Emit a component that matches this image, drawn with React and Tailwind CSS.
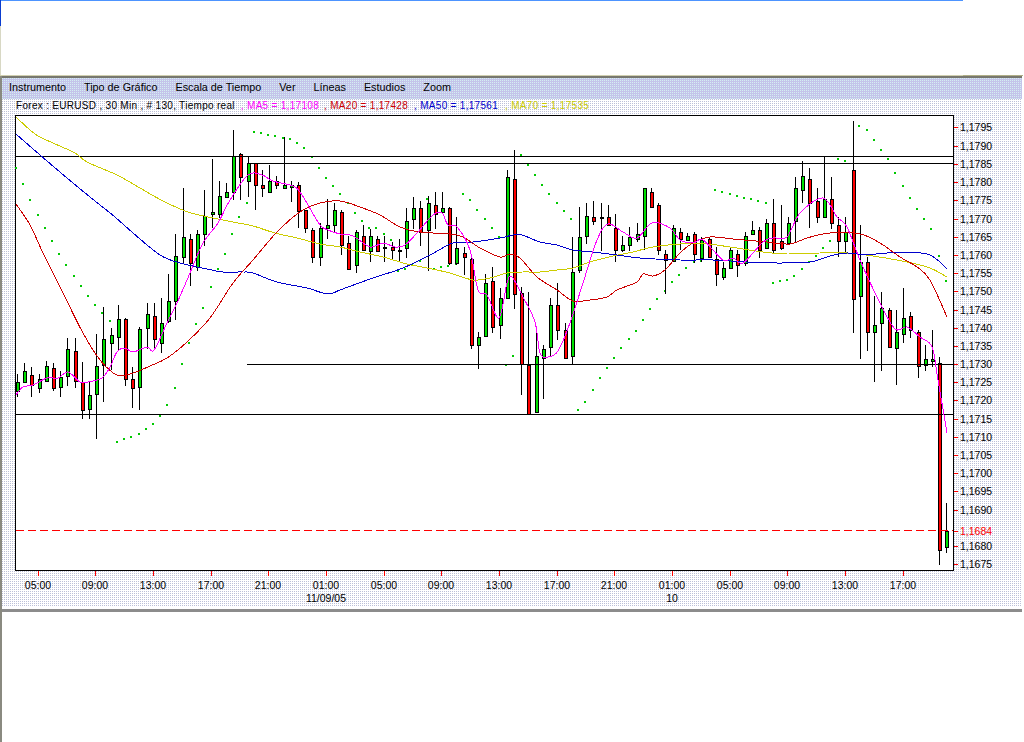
import React from 'react';

// [high, bodyTop, bodyBottom, low, isGreen] in page pixels, one per 30 min bar
const candles = [
  [374,382,391,397,1],[363,371,382,382,1],[367,375,385,397,0],[374,379,388,393,1],[361,366,381,382,1],
  [363,368,388,391,0],[371,377,387,397,1],[338,349,376,386,1],[338,351,381,388,0],[362,382,410,419,0],
  [382,395,409,419,1],[334,366,394,439,1],[307,339,365,402,1],[328,335,343,370,1],[305,319,337,351,1],
  [318,319,379,386,0],[367,379,388,408,0],[327,329,387,410,1],[303,314,328,349,1],[303,316,339,349,0],
  [298,323,343,353,1],[274,301,321,323,1],[234,256,301,320,1],[188,237,257,263,1],[234,239,263,286,0],
  [230,234,267,271,1],[190,216,234,246,1],[159,212,214,228,1],[181,196,214,218,1],[183,192,197,198,1],
  [130,156,192,200,1],[153,154,177,200,0],[157,163,181,197,1],[163,163,185,210,0],[170,185,188,197,0],
  [165,181,192,193,1],[176,181,185,189,0],[137,185,188,189,1],[181,185,187,202,1],[182,185,211,228,0],
  [210,210,228,233,0],[228,230,257,263,0],[223,228,257,266,1],[199,225,228,239,1],[203,210,225,233,1],
  [210,212,245,255,0],[236,243,269,269,0],[230,232,265,273,1],[225,236,250,251,0],[229,236,251,262,1],
  [236,239,251,251,0],[236,247,248,262,0],[242,247,250,260,0],[239,250,251,261,0],[208,221,248,258,1],
  [197,208,219,229,1],[201,208,232,246,0],[196,203,230,271,1],[192,205,214,229,0],[192,208,212,213,1],
  [207,208,263,265,0],[217,248,263,265,1],[247,253,257,275,0],[254,259,345,349,0],[332,337,345,369,1],
  [274,283,336,337,1],[267,281,327,333,0],[288,298,325,339,1],[170,177,298,298,1],[150,179,294,309,0],
  [287,293,364,395,0],[292,365,414,414,0],[332,356,412,412,1],[345,349,358,399,1],[298,305,347,357,1],
  [283,305,330,340,0],[323,330,358,359,0],[237,272,356,364,1],[207,237,270,273,1],[203,216,236,244,1],
  [201,217,221,225,0],[203,217,218,251,0],[205,217,225,226,0],[214,228,250,262,0],[236,245,250,252,1],
  [227,237,245,251,1],[223,234,239,242,1],[188,188,236,250,1],[188,192,207,208,0],[203,205,250,255,0],
  [250,254,260,294,0],[225,228,261,262,1],[228,232,239,250,0],[233,236,240,240,1],[232,234,254,263,0],
  [237,240,258,262,1],[237,239,257,257,0],[247,259,274,286,0],[262,268,277,280,1],[247,250,268,268,1],
  [250,254,265,277,0],[232,236,263,266,1],[221,230,234,235,1],[227,230,250,258,0],[219,223,248,248,1],
  [199,223,250,254,0],[205,241,248,250,0],[217,223,243,243,1],[177,188,221,242,1],[161,176,190,203,1],
  [168,179,203,228,0],[188,201,217,223,0],[157,199,217,218,1],[177,199,223,229,0],[217,225,241,257,0],
  [217,232,241,252,1],[121,170,299,333,0],[225,262,296,359,1],[257,262,332,351,0],[296,325,332,382,1],
  [292,308,323,371,1],[308,310,347,347,0],[310,332,348,385,1],[288,318,334,343,1],[312,316,330,338,0],
  [330,332,366,378,0],[345,359,365,371,1],[330,359,361,367,1],[357,363,550,565,0],[503,531,547,553,1],
];

const ma70 = '16,117 35,134 53,143 75,153 87,162 117,175 140,188 163,201 188,212 213,218 233,222 253,226 275,233 297,238 320,244 340,247 360,252 383,257 407,264 427,268 450,273 473,280 490,278 507,273 523,272 540,272 557,270 573,268 590,262 613,256 633,252 653,247 680,244 707,244 730,247 763,252 787,254 820,253 847,253 873,256 907,262 930,268 947,277';
const ma50 = '16,134 40,155 67,178 90,197 115,217 133,233 160,255 180,263 207,269 223,272 243,272 253,273 277,282 307,288 323,293 333,293 340,290 373,278 403,268 430,255 453,243 473,242 500,238 513,235 522,235 540,242 557,245 573,250 593,252 617,255 640,258 680,260 713,260 747,262 777,263 810,262 830,256 847,253 867,255 887,253 927,254 947,269';
const ma20 = '16,204 30,225 43,253 63,293 83,333 100,360 117,375 133,373 150,366 167,358 187,342 210,318 233,283 253,260 277,232 300,212 320,203 340,201 360,207 380,215 400,227 420,232 450,234 463,237 480,248 500,257 510,254 520,258 537,277 557,290 573,301 590,300 607,297 617,290 637,282 643,274 653,276 665,270 680,253 693,243 710,237 733,239 767,242 790,244 807,238 830,233 860,234 880,243 900,257 917,267 930,280 947,317';
const ma5 = '16,395 23,387 33,385 47,378 58,378 68,372 80,382 88,382 102,378 110,367 117,352 125,348 133,352 147,347 154,350 167,323 177,303 190,273 203,243 218,223 230,200 248,175 262,175 273,181 293,186 300,192 308,205 320,225 328,230 340,234 353,236 370,247 383,243 395,247 405,245 417,233 433,215 442,213 448,225 457,227 470,250 478,290 487,295 499,318 507,283 512,277 523,297 535,322 540,353 548,357 558,351 570,323 583,283 597,240 608,224 623,232 637,238 652,223 670,228 680,240 693,243 703,240 723,260 733,258 743,263 763,242 773,238 787,237 800,213 823,198 837,217 847,227 860,260 880,303 895,329 907,327 920,337 932,347 938,380 947,433';

// parabolic SAR dots
const sar = [
  [16,168],[23,184],[30,200],[38,215],[45,228],[52,241],[59,254],[66,265],[74,276],[81,286],[88,296],[95,305],[102,313],[110,321],
  [117,442],[124,439],[131,437],[139,434],[146,429],[153,424],[160,416],[167,405],[175,388],[182,364],[189,343],[196,324],[203,308],[211,287],[218,269],[225,254],[232,234],[239,217],[247,203],
  [254,132],[261,133],[268,135],[275,136],[283,138],[290,139],[297,143],[304,148],[312,157],[319,168],[326,178],[333,186],[340,194],[348,203],[355,213],[362,221],[369,228],[376,228],[384,234],[391,240],
  [398,271],[405,269],[412,265],[420,261],[427,199],[434,269],[441,267],[448,266],[456,264],
  [463,194],[470,200],[477,210],[485,219],[492,228],[499,237],[506,365],[513,356],
  [521,155],[528,165],[535,175],[542,185],[549,194],[557,203],[564,211],[571,219],
  [578,410],[585,402],[593,390],[600,378],[607,368],[614,358],[621,348],[629,339],[636,331],[643,320],[650,309],[657,299],[665,291],[672,282],[679,275],[686,268],[694,262],[701,261],[709,257],
  [715,190],[722,192],[730,194],[737,196],[744,198],[751,199],[758,201],[766,203],
  [773,283],[780,281],[787,280],[794,276],[802,269],[809,262],[816,256],[823,248],[830,241],[838,159],[845,161],
  [859,126],[867,130],[874,140],[881,150],[888,159],[895,173],[903,186],[910,198],[917,209],[924,219],[931,229],[939,256],[946,281],
];

const prices = [
  ['1,1795',127],['1,1790',146],['1,1785',164],['1,1780',182],['1,1775',200],['1,1770',219],['1,1765',237],['1,1760',255],
  ['1,1755',273],['1,1750',291],['1,1745',310],['1,1740',328],['1,1735',346],['1,1730',364],['1,1725',382],['1,1720',400],
  ['1,1715',419],['1,1710',437],['1,1705',455],['1,1700',473],['1,1695',491],['1,1690',510],['1,1680',546],['1,1675',564],
];

const times = [
  ['05:00',38],['09:00',95],['13:00',153],['17:00',211],['21:00',268],['01:00',326],['05:00',384],['09:00',441],
  ['13:00',499],['17:00',557],['21:00',614],['01:00',672],['05:00',730],['09:00',787],['13:00',845],['17:00',903],
];

const menu = ['Instrumento', 'Tipo de Gráfico', 'Escala de Tiempo', 'Ver', 'Líneas', 'Estudios', 'Zoom'];

// catmull-rom through the sampled points so the averages don't look like straight segments
const smoothPath = (str) => {
  const p = str.split(' ').map((s) => s.split(',').map(Number));
  let d = `M${p[0][0]} ${p[0][1]}`;
  for (let i = 0; i < p.length - 1; i++) {
    const a = p[Math.max(i - 1, 0)];
    const b = p[i];
    const c = p[i + 1];
    const e = p[Math.min(i + 2, p.length - 1)];
    d += ` C${b[0] + (c[0] - a[0]) / 6} ${b[1] + (c[1] - a[1]) / 6} ${c[0] - (e[0] - b[0]) / 6} ${c[1] - (e[1] - b[1]) / 6} ${c[0]} ${c[1]}`;
  }
  return d;
};

const Chart = () => (
  <svg
    viewBox="2 115 1021 492"
    width="1021"
    height="492"
    shapeRendering="crispEdges"
    className="block"
    style={{ fontFamily: '"Liberation Sans", Arial, sans-serif' }}
  >
    <rect x="15.5" y="115.5" width="938" height="455" fill="#fff" stroke="#000" />

    {sar.map(([x, y], i) => (
      <rect key={i} x={x - 1} y={y - 1} width="2" height="2" fill="#00c800" />
    ))}

    {candles.map(([high, top, bottom, low, up], i) => {
      const x = Math.round(17 + 7.204 * i);
      return (
        <g key={i}>
          <line x1={x + 0.5} x2={x + 0.5} y1={high} y2={low} stroke="#000" />
          <rect x={x - 0.5} y={top + 0.5} width="3" height={bottom - top} fill={up ? '#00e000' : '#ff0000'} stroke="#000" />
        </g>
      );
    })}

    <line x1="16" x2="953" y1="156.5" y2="156.5" stroke="#000" />
    <line x1="250" x2="953" y1="163.5" y2="163.5" stroke="#000" />
    <line x1="247" x2="953" y1="364.5" y2="364.5" stroke="#000" />
    <line x1="16" x2="953" y1="414.5" y2="414.5" stroke="#000" />
    <line x1="16" x2="953" y1="530.5" y2="530.5" stroke="#ff0000" strokeDasharray="8 4" />

    <path d={smoothPath(ma70)} fill="none" stroke="#cccc00" />
    <path d={smoothPath(ma50)} fill="none" stroke="#0000cc" />
    <path d={smoothPath(ma20)} fill="none" stroke="#cc0000" />
    <path d={smoothPath(ma5)} fill="none" stroke="#ff00ff" />

    {prices.map(([label, y]) => (
      <g key={label}>
        <line x1="954" x2="958" y1={y + 0.5} y2={y + 0.5} stroke="#ff0000" />
        <text x="960" y={y + 4} fontSize="10.5">{label}</text>
      </g>
    ))}
    <line x1="954" x2="958" y1="531.5" y2="531.5" stroke="#ff0000" />
    <text x="960" y="535" fontSize="10.5" fill="#ff0000">1,1684</text>

    {times.map(([label, x], i) => (
      <g key={i}>
        <line x1={x + 0.5} x2={x + 0.5} y1="571" y2="576" stroke="#ff0000" />
        <text x={x} y="589" fontSize="10.5" textAnchor="middle">{label}</text>
      </g>
    ))}
    <text x="326" y="602" fontSize="10.5" textAnchor="middle">11/09/05</text>
    <text x="672" y="602" fontSize="10.5" textAnchor="middle">10</text>
  </svg>
);

export default function App() {
  return (
    <div className="w-[1024px] h-[742px] bg-white flex flex-col overflow-hidden font-['Liberation_Sans',Arial,sans-serif] text-black">
      {/* empty page area above the applet */}
      <div className="h-[75px] flex shrink-0">
        <div className="w-px flex flex-col">
          <div className="h-[26px] bg-[#0a3ccf]" />
          <div className="flex-1 bg-[#d8d8c4]" />
        </div>
        <div className="flex-1">
          <div className="h-px w-[962px] bg-[#4d94ff]" />
        </div>
      </div>

      <div className="h-px flex shrink-0">
        <div className="w-[963px] bg-[#d0cfb0]" />
        <div className="w-[60px] bg-[#b0af88]" />
      </div>

      <div className="flex-1 border-l-2 border-[#8a8a80]">
        <div className="w-[1020px]">
          <div className="h-[2px] bg-[#77776e]" />

          <div className="h-[21px] flex items-center gap-[18px] pl-[7px] pb-[2px] text-[10.8px] leading-none bg-[#c4c4ea] bg-[radial-gradient(circle_at_0.5px_0.5px,#d4eef2_0.7px,transparent_0.7px)] bg-[size:2px_2px]">
            {menu.map((item) => (
              <span key={item}>{item}</span>
            ))}
          </div>

          <div className="bg-white bg-[radial-gradient(circle_at_0.5px_0.5px,#bcc0d8_0.7px,transparent_0.7px)] bg-[size:2px_2px]">
            <div className="h-[16px] flex items-start pt-[1px] pl-[14px] text-[10px] leading-[12px] tracking-[0.3px] whitespace-pre">
              <span>Forex : EURUSD , 30 Min , # 130, Tiempo real</span>
              <span className="ml-[6px] text-[#ff00ff]">, MA5 = 1,17108</span>
              <span className="ml-[5px] text-[#cc0000]">, MA20 = 1,17428</span>
              <span className="ml-[6px] text-[#0000cc]">, MA50 = 1,17561</span>
              <span className="ml-[7px] text-[#cccc00]">, MA70 = 1,17535</span>
            </div>
            <Chart />
          </div>

          <div className="h-[2px] bg-white" />
          <div className="h-[3px] bg-[#8c8c8c]" />
        </div>
      </div>
    </div>
  );
}
